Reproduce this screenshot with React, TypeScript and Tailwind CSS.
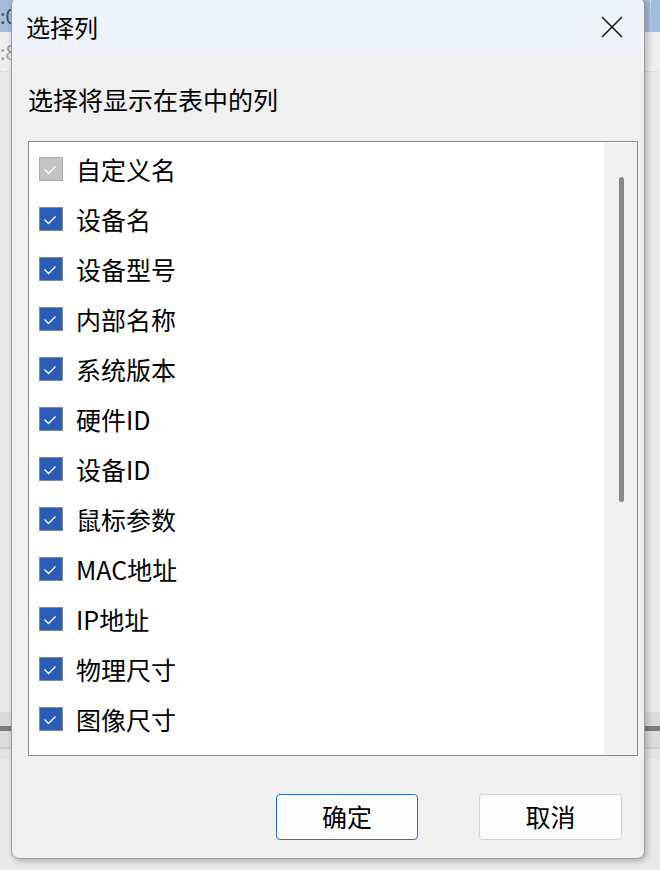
const columns = [
  { label: '自定义名', disabled: true },
  { label: '设备名' },
  { label: '设备型号' },
  { label: '内部名称' },
  { label: '系统版本' },
  { label: '硬件ID' },
  { label: '设备ID' },
  { label: '鼠标参数' },
  { label: 'MAC地址' },
  { label: 'IP地址' },
  { label: '物理尺寸' },
  { label: '图像尺寸' },
];

const font = { fontFamily: '"Noto Sans CJK SC", "Noto Sans", sans-serif' };

const Check = ({ disabled }: { disabled?: boolean }) => (
  <span
    className={
      disabled
        ? 'flex h-[24px] w-[24px] shrink-0 items-center justify-center border border-[#a9a9a9] bg-[#c3c3c3]'
        : 'flex h-[24px] w-[24px] shrink-0 items-center justify-center border border-[#858b96] bg-[#2b5cb7]'
    }
  >
    <svg width="22" height="22" viewBox="1 1 22 22" fill="none">
      <path d="M5.5 12.5 L9.5 16.5 L16.5 9.5" stroke="#ffffff" strokeWidth="1.4" />
    </svg>
  </span>
);

export default function App() {
  return (
    <div className="relative h-[870px] w-[660px] overflow-hidden bg-[#e9e9e9]" style={font}>
      {/* background window peeking out */}
      <div className="flex h-[32px] items-center bg-[#a3bcdd] text-[20px] text-[#4a4a4a]">
        <span className="w-[11px] overflow-hidden whitespace-nowrap leading-none">:0</span>
      </div>
      <div className="flex h-[40px] items-center border-b border-dotted border-[#cfcfcf] bg-[#eeeeee] text-[20px] text-[#9a9a9a]">
        <span className="w-[11px] overflow-hidden whitespace-nowrap leading-none">:8</span>
      </div>
      <div className="absolute left-[650px] top-0 h-[72px] border-l border-dotted border-[#d8e2ee]" />
      <div className="absolute left-0 right-0 top-[712px] flex flex-col">
        <div className="h-[14px] bg-[#dadada]" />
        <div className="h-[5px] bg-[#7c7c7c]" />
        <div className="h-[16px] bg-[#dcdcdc]" />
        <div className="h-[2px] bg-[#cdcdcd]" />
        <div className="h-[10px] bg-[#e2e2e2]" />
      </div>

      {/* dialog */}
      <div className="absolute left-[11px] top-[-3px] flex h-[862px] w-[634px] flex-col overflow-hidden rounded-[8px] border border-[#9c9c9c] bg-[#f0f0f0] shadow-[2px_2px_6px_rgba(0,0,0,0.25)]">
        <div className="flex h-[54px] shrink-0 items-center justify-between bg-[#eef2f9] pl-[14px] pr-[21px] pt-[3px]">
          <span className="text-[24px] leading-none text-black">选择列</span>
          <svg width="22" height="22" viewBox="0 0 22 22" fill="none">
            <path d="M1 1 L21 21 M21 1 L1 21" stroke="#1a1a1a" strokeWidth="1.6" />
          </svg>
        </div>

        <div className="flex flex-1 flex-col pl-[16px] pr-[6px]">
          <div className="mt-[35px] text-[25px] leading-[24px] text-black">选择将显示在表中的列</div>

          <div className="mt-[30px] flex h-[615px] border border-[#828790] bg-white">
            <div className="flex flex-1 flex-col pl-[10px] pt-[2px]">
              {columns.map((c) => (
                <div key={c.label} className="flex h-[50px] shrink-0 items-center gap-[13px]">
                  <Check disabled={c.disabled} />
                  <span className="text-[25px] leading-none text-black">{c.label}</span>
                </div>
              ))}
            </div>
            <div className="mt-px flex w-[33px] shrink-0 justify-center bg-[#f0f0f0] pl-[2px] pt-[34px]">
              <div className="h-[325px] w-[5px] rounded-full bg-[#898989]" />
            </div>
          </div>

          <div className="mt-[38px] flex justify-end gap-[61px] pr-[16px]">
            <button className="flex h-[46px] w-[142px] items-center justify-center rounded-[4px] border border-[#2e6fc6] bg-[#fdfdfd] text-[25px] text-black">
              确定
            </button>
            <button className="flex h-[46px] w-[143px] items-center justify-center rounded-[4px] border border-[#d2d2d2] bg-[#fdfdfd] text-[25px] text-black">
              取消
            </button>
          </div>
        </div>
      </div>
    </div>
  );
}
